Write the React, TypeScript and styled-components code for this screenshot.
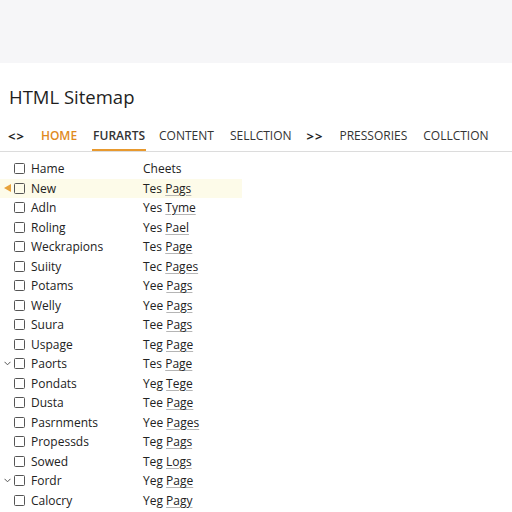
import styled, { createGlobalStyle } from 'styled-components';

const Global = createGlobalStyle`
  html, body { margin: 0; padding: 0; background: #fff; }
  body { font-family: "Open Sans", "Liberation Sans", sans-serif; color: #222; }
`

const tabs = [
  { label: 'HOME', kind: 'home' },
  { label: 'FURARTS', kind: 'active' },
  { label: 'CONTENT', kind: 'plain' },
  { label: 'SELLCTION', kind: 'plain' },
]
const tabsRight = ['PRESSORIES', 'COLLCTION']

type Row = { name: string; a: string; b: string; mark?: 'arrow' | 'chev'; hi?: boolean }

const rows: Row[] = [
  { name: 'Hame', a: 'Cheets', b: '' },
  { name: 'New', a: 'Tes', b: 'Pags', mark: 'arrow', hi: true },
  { name: 'Adln', a: 'Yes', b: 'Tyme' },
  { name: 'Roling', a: 'Yes', b: 'Pael' },
  { name: 'Weckrapions', a: 'Tes', b: 'Page' },
  { name: 'Suiity', a: 'Tec', b: 'Pages' },
  { name: 'Potams', a: 'Yee', b: 'Pags' },
  { name: 'Welly', a: 'Yee', b: 'Pags' },
  { name: 'Suura', a: 'Tee', b: 'Pags' },
  { name: 'Uspage', a: 'Teg', b: 'Page' },
  { name: 'Paorts', a: 'Tes', b: 'Page', mark: 'chev' },
  { name: 'Pondats', a: 'Yeg', b: 'Tege' },
  { name: 'Dusta', a: 'Tee', b: 'Page' },
  { name: 'Pasrnments', a: 'Yee', b: 'Pages' },
  { name: 'Propessds', a: 'Teg', b: 'Pags' },
  { name: 'Sowed', a: 'Teg', b: 'Logs' },
  { name: 'Fordr', a: 'Yeg', b: 'Page', mark: 'chev' },
  { name: 'Calocry', a: 'Yeg', b: 'Pagy' },
]

export default function App() {
  return (
    <>
      <Global />
      <Page>
        <TopBand />
        <Title>HTML Sitemap</Title>
        <Nav>
          <Arrows>&lt;&gt;</Arrows>
          {tabs.map(t => (
            <Tab key={t.label} $kind={t.kind}>{t.label}</Tab>
          ))}
          <Arrows>&gt;&gt;</Arrows>
          {tabsRight.map(t => (
            <Tab key={t} $kind="plain">{t}</Tab>
          ))}
        </Nav>
        <List>
          {rows.map(r => (
            <Item key={r.name} $hi={!!r.hi}>
              <Mark>
                {r.mark === 'arrow' && (
                  <svg width="7" height="8" viewBox="0 0 7 8"><path d="M7 0 L0 4 L7 8 Z" fill="#e8a23a" /></svg>
                )}
                {r.mark === 'chev' && (
                  <svg width="7" height="5" viewBox="0 0 7 5"><path d="M0.5 0.8 L3.5 3.8 L6.5 0.8" fill="none" stroke="#555" strokeWidth="1" /></svg>
                )}
              </Mark>
              <Box />
              <Name>{r.name}</Name>
              <Value>
                {r.a}
                {r.b && <> <Link>{r.b}</Link></>}
              </Value>
            </Item>
          ))}
        </List>
      </Page>
    </>
  )
}

const Page = styled.main`
  width: 512px;
  min-height: 512px;
  display: flex;
  flex-direction: column;
`

const TopBand = styled.div`
  height: 63px;
  background: #f6f6f8;
`

const Title = styled.h1`
  margin: 22px 0 0 9px;
  font-size: 18.5px;
  line-height: 24px;
  font-weight: 400;
  color: #1e1e1e;
`

const Nav = styled.nav`
  margin-top: 16px;
  display: flex;
  align-items: flex-start;
  padding: 1px 0 0 8px;
  height: 25px;
  border-bottom: 1px solid #dcdcdc;
`

const Arrows = styled.span`
  font-size: 13px;
  font-weight: 700;
  color: #222;
  letter-spacing: 1px;
  margin-right: 15px;
  line-height: 20px;
`

const Tab = styled.span<{ $kind: string }>`
  font-size: 12px;
  line-height: 20px;
  padding: 0 1px 3px;
  margin-right: 14px;
  color: ${p => (p.$kind === 'home' ? '#e08a1e' : '#333')};
  font-weight: ${p => (p.$kind === 'plain' ? 400 : 600)};
  border-bottom: 2px solid ${p => (p.$kind === 'active' ? '#e8992e' : 'transparent')};
  &:nth-of-type(3) { margin-right: 12px; }
`

const List = styled.ul`
  list-style: none;
  margin: 7px 0 0;
  padding: 0;
`

const Item = styled.li<{ $hi: boolean }>`
  display: flex;
  align-items: center;
  height: 19.5px;
  width: 242px;
  background: ${p => (p.$hi ? '#fdfbe9' : 'transparent')};
  font-size: 12px;
  color: #222;
`

const Mark = styled.span`
  width: 14px;
  display: flex;
  justify-content: center;
  align-items: center;
`

const Box = styled.span`
  width: 9px;
  height: 9px;
  border: 1px solid #555;
  border-radius: 1.5px;
  margin-right: 6px;
`

const Name = styled.span`
  width: 112px;
`

const Value = styled.span`
  white-space: pre;
`

const Link = styled.span`
  text-decoration: underline;
  text-decoration-color: #b5b5b5;
  text-underline-offset: 2px;
  text-decoration-thickness: 1px;
`
